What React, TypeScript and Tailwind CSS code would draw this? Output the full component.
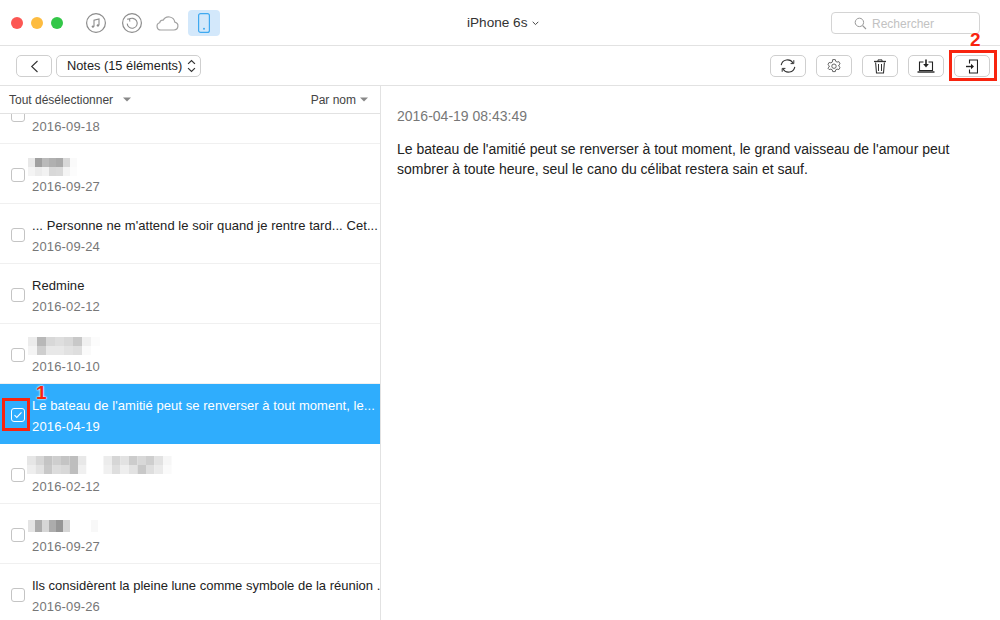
import React from "react";

const Traffic = ({ c }: { c: string }) => <span className={`w-3 h-3 rounded-full ${c}`} />;

function Mosaic({ rows, x = 0, y = 0, cw = 7, ch = 9 }: { rows: number[][]; x?: number; y?: number; cw?: number; ch?: number }) {
  const w = Math.max(...rows.map((r) => r.length)) * cw;
  const h = rows.length * ch;
  return (
    <svg width={w} height={h} className="absolute" style={{ left: x, top: y }}>
      {rows.map((r, j) =>
        r.map((v, i) => (
          <rect key={`${i}-${j}`} x={i * cw} y={j * ch} width={cw} height={ch} fill={`rgb(${v},${v},${v})`} />
        ))
      )}
    </svg>
  );
}

const Check = ({ checked }: { checked?: boolean }) => (
  <span
    className={`w-[14px] h-[14px] shrink-0 rounded-[3px] border flex items-center justify-center ${
      checked ? "border-white bg-transparent" : "border-[#c4c4c4] bg-white"
    }`}
  >
    {checked && (
      <svg width="10" height="8" viewBox="0 0 10 8" fill="none">
        <path d="M1.5 4.2 L3.8 6.4 L8.5 1.4" stroke="white" strokeWidth="1.1" />
      </svg>
    )}
  </span>
);

type Row = { title?: string; date: string; selected?: boolean; mosaic?: number[][]; mx?: number; my?: number; cw?: number; ch?: number; tight?: boolean };

const rows: Row[] = [
  {
    date: "2016-09-27",
    mx: 28,
    my: 14,
    cw: 7,
    ch: 9,
    mosaic: [
      [232, 160, 186, 176, 170, 216, 250],
      [244, 236, 242, 216, 218, 244, 252],
    ],
  },
  { title: "... Personne ne m'attend le soir quand je rentre tard... Cet...", date: "2016-09-24" },
  { title: "Redmine", date: "2016-02-12" },
  {
    date: "2016-10-10",
    mx: 28,
    my: 13,
    cw: 9,
    ch: 9,
    mosaic: [
      [236, 184, 216, 222, 216, 200, 240, 252],
      [244, 206, 232, 232, 226, 222, 250, 255],
    ],
  },
  { title: "Le bateau de l'amitié peut se renverser à tout moment, le...", date: "2016-04-19", selected: true },
  {
    date: "2016-02-12",
    mx: 27,
    my: 12,
    cw: 8.5,
    ch: 9,
    mosaic: [
      [230, 214, 196, 206, 196, 190, 232, 255, 255, 236, 214, 226, 204, 216, 206, 226, 246],
      [238, 226, 200, 220, 216, 190, 240, 255, 255, 240, 222, 238, 226, 200, 222, 234, 250],
    ],
  },
  {
    date: "2016-09-27",
    mx: 28,
    my: 16,
    cw: 7,
    ch: 12,
    mosaic: [[228, 172, 214, 172, 150, 214, 255, 255, 255, 248]],
  },
  { title: "Ils considèrent la pleine lune comme symbole de la réunion .", date: "2016-09-26", tight: true },
];

const Btn = ({ children }: { children: React.ReactNode }) => (
  <button className="w-9 h-[22px] rounded-[5px] border border-[#cfcfcf] bg-white flex items-center justify-center">
    {children}
  </button>
);

export default function App() {
  return (
    <div
      className="relative w-[1000px] h-[620px] bg-white overflow-hidden flex flex-col text-[#222]"
      style={{ fontFamily: '"Liberation Sans", Arial, sans-serif' }}
    >
      {/* Title bar */}
      <div className="h-[46px] shrink-0 border-b border-[#e2e2e2] flex items-center pt-px relative">
        <div className="flex items-center gap-2 pl-[11px] w-[86px]">
          <Traffic c="bg-[#fc5753]" />
          <Traffic c="bg-[#fdbc40]" />
          <Traffic c="bg-[#33c748]" />
        </div>
        <div className="flex items-center">
          <svg width="20" height="20" viewBox="1 1 20 20" fill="none">
            <circle cx="11" cy="11" r="9.4" stroke="#8c8c8c" strokeWidth="1.2" />
            <path d="M9 14.6V8.2l5-1.2v6.2" stroke="#8c8c8c" strokeWidth="1.1" />
            <circle cx="7.9" cy="14.6" r="1.2" fill="#8c8c8c" />
            <circle cx="12.9" cy="13.4" r="1.2" fill="#8c8c8c" />
          </svg>
          <svg width="20" height="20" viewBox="1 1 20 20" fill="none" className="ml-4">
            <circle cx="11" cy="11" r="9.4" stroke="#8c8c8c" strokeWidth="1.2" />
            <path d="M7.8 7.6a5 5 0 1 1-1.6 4" stroke="#8c8c8c" strokeWidth="1.1" />
            <path d="M6 7.2l2.6-.4.2 2.8" stroke="#8c8c8c" strokeWidth="1" />
          </svg>
          <svg width="24" height="16" viewBox="0 0 24 16" fill="none" className="ml-[13px]">
            <path
              d="M6 15h13a4 4 0 0 0 .8-7.9A6.2 6.2 0 0 0 8.2 5.2 3.4 3.4 0 0 0 4.6 7.8 3.7 3.7 0 0 0 6 15z"
              stroke="#a2a2a2"
              strokeWidth="1.2"
            />
          </svg>
          <div className="ml-[9px] w-8 h-[26px] rounded-[4px] bg-[#d3e8fb] flex items-center justify-center">
            <svg width="12" height="20" viewBox="0 0 12 20" fill="none">
              <rect x="0.6" y="0.6" width="10.8" height="18.8" rx="2" stroke="#3fa9f0" strokeWidth="1.2" />
              <circle cx="6" cy="15.8" r="1" fill="#3fa9f0" />
            </svg>
          </div>
        </div>
        <div className="absolute left-[467px] top-[15px] flex items-center gap-[5px] text-[13.6px] leading-4 text-[#333]">
          iPhone 6s
          <svg width="7" height="5" viewBox="0 0 7 5" fill="none">
            <path d="M.7 .8 3.5 3.6 6.3 .8" stroke="#444" strokeWidth="1" />
          </svg>
        </div>
        <div className="absolute left-[831px] top-[12px] w-[149px] h-[22px] rounded-[4px] border border-[#d4d4d4] flex items-center pl-[22px] pt-px gap-[5px] text-[12px] text-[#c2c2c2]">
          <svg width="13" height="13" viewBox="0 0 13 13" fill="none">
            <circle cx="5.4" cy="5.4" r="4.2" stroke="#9a9a9a" strokeWidth="1" />
            <path d="M8.5 8.5 12 12" stroke="#9a9a9a" strokeWidth="1.1" />
          </svg>
          Rechercher
        </div>
      </div>

      {/* Toolbar */}
      <div className="h-[40px] shrink-0 border-b border-[#e2e2e2] flex items-center pl-4 pr-[10px] pt-px">
        <Btn>
          <svg width="9" height="13" viewBox="0 0 9 13" fill="none">
            <path d="M7.5 1 1.7 6.5 7.5 12" stroke="#333" strokeWidth="1.1" />
          </svg>
        </Btn>
        <div className="ml-1 w-[145px] h-[22px] rounded-[5px] border border-[#cfcfcf] flex items-center pl-[10px] gap-[5px] text-[12.8px] text-[#222] whitespace-nowrap">
          Notes (15 éléments)
          <svg width="9" height="14" viewBox="0 0 8 13" fill="none">
            <path d="M.8 4.6 4 1.4l3.2 3.2M.8 8.4 4 11.6l3.2-3.2" stroke="#333" strokeWidth="1.1" />
          </svg>
        </div>
        <div className="ml-auto flex items-center gap-[10px]">
          <Btn>
            <svg width="16" height="14" viewBox="0 0 16 14" fill="none">
              <path d="M1.2 6.2A6.4 6.4 0 0 1 13 4" stroke="#333" strokeWidth="1.1" />
              <path d="M14.8 7.8A6.4 6.4 0 0 1 3 10" stroke="#333" strokeWidth="1.1" />
              <path d="M13.8 1.2V4.6h-3.2" stroke="#333" strokeWidth="1" />
              <path d="M2.2 12.8V9.4h3.2" stroke="#333" strokeWidth="1" />
            </svg>
          </Btn>
          <Btn>
            <svg width="14" height="14" viewBox="0 0 14 14" fill="none">
              <path
                d="M5.7 1h2.6l.4 1.7 1.4.8 1.7-.5 1.3 2.2-1.3 1.2v1.2l1.3 1.2-1.3 2.2-1.7-.5-1.4.8-.4 1.7H5.7l-.4-1.7-1.4-.8-1.7.5L.9 9.6l1.3-1.2V7.2L.9 6l1.3-2.2 1.7.5 1.4-.8z"
                transform="translate(0 -.4)"
                stroke="#555"
                strokeWidth=".9"
              />
              <circle cx="7" cy="7.2" r="2.2" stroke="#555" strokeWidth=".9" />
            </svg>
          </Btn>
          <Btn>
            <svg width="14" height="15" viewBox="0 0 14 15" fill="none">
              <path d="M1 2.5h12" stroke="#333" strokeWidth="1.3" />
              <path d="M5 2.2V.9h4v1.3" stroke="#333" strokeWidth="1" />
              <path d="M2.6 3.5 3.5 14h7l.9-10.5" stroke="#333" strokeWidth="1.1" />
              <path d="M5.5 5v7M8.5 5v7" stroke="#333" strokeWidth="1" />
            </svg>
          </Btn>
          <Btn>
            <svg width="18" height="14" viewBox="0 0 18 14" fill="none">
              <path d="M6.5 3H2.5v8.5h13V3h-4" stroke="#222" strokeWidth="1.1" />
              <path d="M.5 13h17" stroke="#222" strokeWidth="1.4" />
              <path d="M9 .5v6" stroke="#222" strokeWidth="1.6" />
              <path d="M6.2 5 9 8.4 11.8 5z" fill="#222" />
            </svg>
          </Btn>
          <Btn>
            <svg width="12" height="15" viewBox="0 0 12 15" fill="none">
              <path d="M3.5 4.5V1h8v13h-8v-3.5" stroke="#222" strokeWidth="1.1" />
              <path d="M0 7.5h5.5" stroke="#222" strokeWidth="1.4" />
              <path d="M5 4.8 8 7.5 5 10.2z" fill="#222" />
            </svg>
          </Btn>
        </div>
      </div>

      {/* Body */}
      <div className="flex-1 flex min-h-0">
        <div className="w-[381px] shrink-0 border-r border-[#e2e2e2] flex flex-col min-h-0">
          <div className="h-7 shrink-0 border-b border-[#e2e2e2] flex items-center pl-[9px] pr-[12px] text-[12px] text-[#444]">
            Tout désélectionner
            <svg width="8" height="5" viewBox="0 0 8 5" className="ml-[10px]">
              <path d="M0 .5h8L4 4.5z" fill="#888" />
            </svg>
            <span className="ml-auto">Par nom</span>
            <svg width="8" height="5" viewBox="0 0 8 5" className="ml-[4px]">
              <path d="M0 .5h8L4 4.5z" fill="#888" />
            </svg>
          </div>
          <div className="flex-1 overflow-hidden">
            {/* clipped first row */}
            <div className="relative h-[30px] border-b border-[#f0f0f0] overflow-hidden">
              <span className="absolute left-[11px] top-[-6px]">
                <Check />
              </span>
              <div className="absolute left-8 top-[5px] text-[13px] leading-4 text-[#777] tracking-[.15px]">2016-09-18</div>
            </div>
            {rows.map((r, i) => (
              <div
                key={i}
                className={`relative h-[60px] flex items-center pl-[11px] border-b ${
                  r.selected ? "bg-[#2fadfd] border-[#2fadfd]" : "border-[#f0f0f0]"
                }`}
              >
                <span className="mt-[2px]">
                  <Check checked={r.selected} />
                </span>
                <div className="ml-[7px] w-[347px] pt-[5px]">
                  {r.mosaic ? (
                    <div className="h-[16px]" />
                  ) : (
                    <div
                      className={`text-[13px] leading-4 whitespace-nowrap ${r.tight ? "tracking-normal" : "tracking-[.06px]"} ${
                        r.selected ? "text-white" : "text-[#222]"
                      }`}
                    >
                      {r.title}
                    </div>
                  )}
                  <div className={`mt-[5px] text-[13px] leading-4 tracking-[.15px] ${r.selected ? "text-white" : "text-[#777]"}`}>
                    {r.date}
                  </div>
                </div>
                {r.mosaic && <Mosaic rows={r.mosaic} x={r.mx} y={r.my} cw={r.cw} ch={r.ch} />}
              </div>
            ))}
          </div>
        </div>
        <div className="flex-1 pl-4 pr-4 pt-[22px]">
          <div className="text-[14px] leading-4 text-[#777]">2016-04-19 08:43:49</div>
          <div className="mt-[15px] text-[14px] leading-5 text-[#222] w-[580px]">
            Le bateau de l'amitié peut se renverser à tout moment, le grand vaisseau de l'amour peut sombrer à toute
            heure, seul le cano du célibat restera sain et sauf.
          </div>
        </div>
      </div>

      {/* Annotations */}
      <div className="absolute left-[2px] top-[398px] w-[28px] h-[33px] border-[3px] border-[#f8240f]" />
      <div className="absolute left-[949px] top-[50px] w-[48px] h-[31px] border-[3px] border-[#f8240f]" />
      <div className="absolute left-[36px] top-[383px] text-[19px] leading-5 font-bold text-[#f8240f]" style={{ textShadow: "0 0 2px #fff, 0 0 2px #fff" }}>
        1
      </div>
      <div className="absolute left-[970px] top-[30px] text-[19px] leading-5 font-bold text-[#f8240f]" style={{ textShadow: "0 0 2px #fff, 0 0 2px #fff" }}>
        2
      </div>
    </div>
  );
}
